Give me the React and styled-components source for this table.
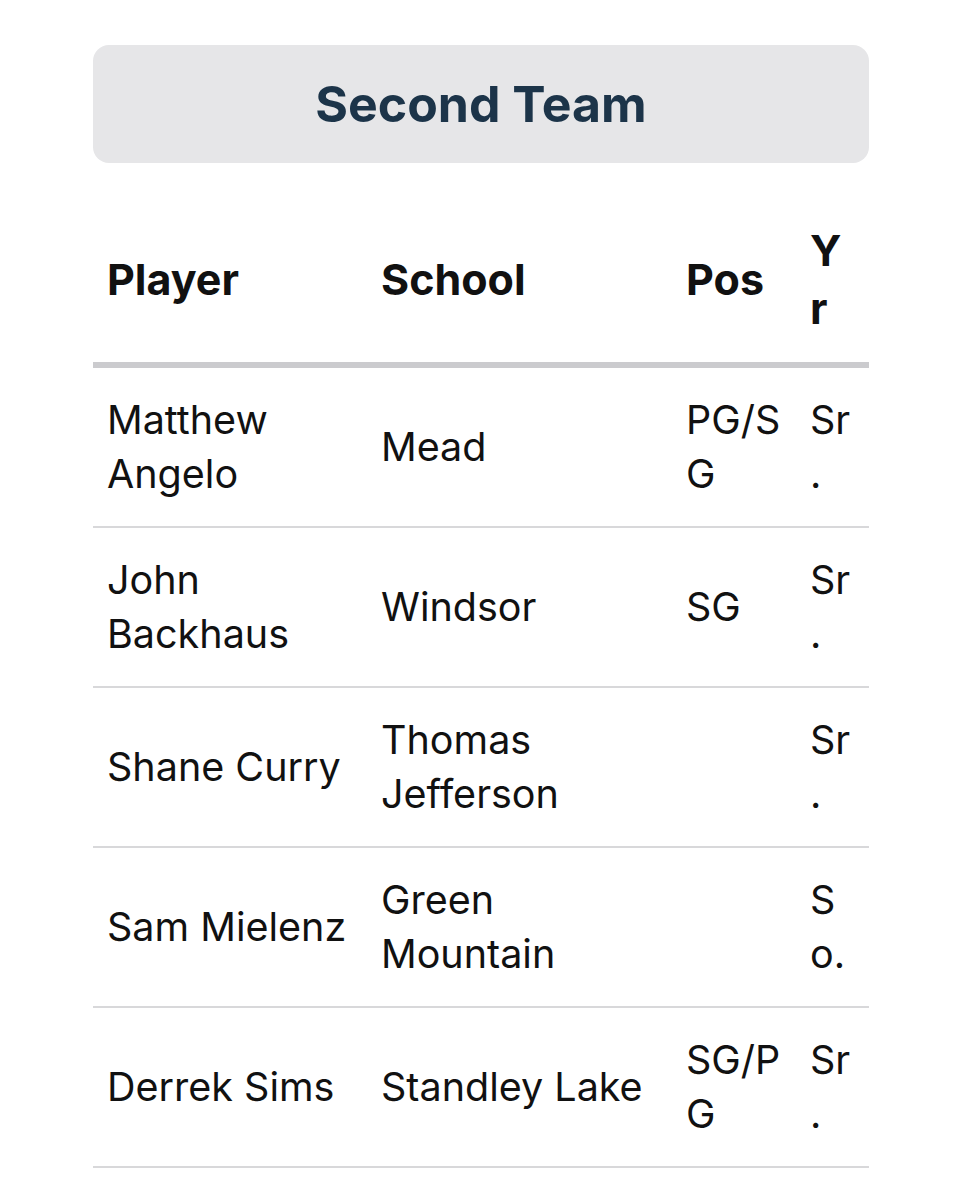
import React from 'react'
import styled, { createGlobalStyle } from 'styled-components'

const GlobalStyle = createGlobalStyle`
  body {
    margin: 0;
    background: #ffffff;
    font-family: Inter, "Noto Sans", "Liberation Sans", sans-serif;
    color: #111111;
  }
`

const players = [
  { name: 'Matthew Angelo', school: 'Mead', pos: 'PG/SG', yr: 'Sr.' },
  { name: 'John Backhaus', school: 'Windsor', pos: 'SG', yr: 'Sr.' },
  { name: 'Shane Curry', school: 'Thomas Jefferson', pos: '', yr: 'Sr.' },
  { name: 'Sam Mielenz', school: 'Green Mountain', pos: '', yr: 'So.' },
  { name: 'Derrek Sims', school: 'Standley Lake', pos: 'SG/PG', yr: 'Sr.' },
]

function App() {
  return (
    <Page>
      <GlobalStyle />
      <TeamBanner>
        <h2>Second Team</h2>
      </TeamBanner>
      <RosterTable>
        <colgroup>
          <col style={{ width: 274 }} />
          <col style={{ width: 305 }} />
          <col style={{ width: 124 }} />
          <col />
        </colgroup>
        <thead>
          <tr>
            <HeadCell>Player</HeadCell>
            <HeadCell>School</HeadCell>
            <HeadCell>Pos</HeadCell>
            <HeadCell>Yr</HeadCell>
          </tr>
        </thead>
        <tbody>
          {players.map((p) => (
            <Row key={p.name}>
              <Cell>{p.name}</Cell>
              <Cell>{p.school}</Cell>
              <Cell>{p.pos}</Cell>
              <Cell>{p.yr}</Cell>
            </Row>
          ))}
        </tbody>
      </RosterTable>
    </Page>
  )
}

export default App

const Page = styled.div`
  width: 776px;
  padding: 45px 0 0 93px;
`

const TeamBanner = styled.div`
  height: 118px;
  display: flex;
  align-items: center;
  justify-content: center;
  background: #e6e6e8;
  border-radius: 16px;
  h2 {
    margin: 0;
    font-size: 50px;
    font-weight: 700;
    color: #1c3449;
  }
`

const RosterTable = styled.table`
  width: 100%;
  margin-top: 33px;
  border-collapse: collapse;
  table-layout: fixed;
`

const HeadCell = styled.th`
  text-align: left;
  vertical-align: middle;
  padding: 25px 14px;
  font-size: 43px;
  line-height: 58px;
  font-weight: 700;
  color: #111111;
  border-bottom: 6px solid #cbcbce;
  word-break: break-all;
`

const Row = styled.tr`
  border-bottom: 2px solid #d8d8da;
`

const Cell = styled.td`
  vertical-align: middle;
  padding: 25px 14px;
  font-size: 39.5px;
  line-height: 54px;
  color: #111111;
  overflow-wrap: anywhere;
`
